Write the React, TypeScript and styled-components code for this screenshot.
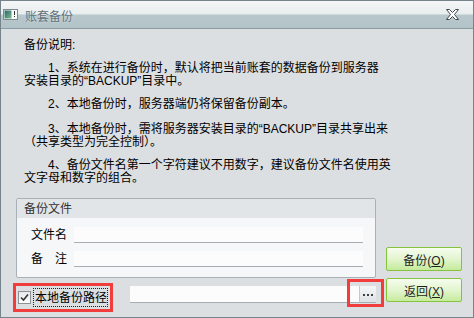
import React from 'react';
import styled, { createGlobalStyle } from 'styled-components';

const GlobalStyle = createGlobalStyle`
  html, body {
    margin: 0;
    padding: 0;
    background: #dcdfe2;
  }
  body {
    font-family: "Liberation Sans", "Noto Sans CJK SC", sans-serif;
    font-size: 12px;
    color: #000;
  }
`;

const Window = styled.div`
  width: 474px;
  height: 318px;
  box-sizing: border-box;
  border: 1px solid #74848a;
  background: #dcdfe2;
  display: flex;
  flex-direction: column;
`;

const TitleBar = styled.div`
  height: 27px;
  flex: none;
  display: flex;
  align-items: center;
  padding: 0 14px 0 2px;
  border-bottom: 1px solid #8b9ca2;
  background: linear-gradient(
    to bottom,
    #f4f6f7 0px,
    #e8edee 13px,
    #b7c7cc 14px,
    #b3c4c9 100%
  );
`;

const Title = styled.span`
  margin-left: 7px;
  padding-top: 4px;
  font-size: 12px;
  line-height: 14px;
  color: #5f7078;
  text-shadow: 0 0 2px rgba(255, 255, 255, 0.7);
  flex: 1;
`;

const Body = styled.div`
  flex: 1;
  padding-top: 10px;
  display: flex;
  flex-direction: column;
`;

const Notes = styled.div`
  padding-left: 23px;
`;

const Para = styled.p<{ $top?: number; $indent?: boolean }>`
  margin: ${(p) => p.$top ?? 0}px 0 0 0;
  line-height: 13px;
  white-space: nowrap;
  text-indent: ${(p) => (p.$indent ? 24 : 0)}px;
`;

const FileRow = styled.div`
  margin-top: 13px;
  padding-left: 15px;
  display: flex;
  align-items: flex-end;
`;

const GroupBox = styled.div`
  width: 360px;
  height: 80px;
  box-sizing: border-box;
  border: 1px solid #a9b0b6;
  border-radius: 2px;
  background: #f6f7f8;
  display: flex;
  flex-direction: column;
`;

const GroupHeader = styled.div`
  height: 19px;
  line-height: 20px;
  padding-left: 7px;
  background: #e2e5e8;
  color: #333;
`;

const GroupBody = styled.div`
  padding: 9px 11px 0 14px;
  display: flex;
  flex-direction: column;
  gap: 8px;
`;

const Field = styled.div`
  display: flex;
  align-items: flex-end;
  height: 16px;
`;

const FieldLabel = styled.span`
  width: 43px;
  line-height: 13px;
  padding-bottom: 1px;
  flex: none;
`;

const TextInput = styled.input`
  box-sizing: border-box;
  height: ${(p) => p.height ?? 16}px;
  width: ${(p) => p.width}px;
  padding: 0 3px;
  margin: 0;
  border: none;
  border-bottom: 1px solid #a6adb3;
  background: #fcfcfc;
  outline: none;
  font: inherit;
`;

const ActionButton = styled.button<{ $bottom?: number }>`
  width: 76px;
  height: 24px;
  margin: 0 0 ${(p) => p.$bottom ?? 0}px 10px;
  padding: 0;
  box-sizing: border-box;
  border: 1px solid #86c43e;
  border-radius: 2px;
  background: linear-gradient(to bottom, #f6fcef 0%, #e3f5cf 50%, #c5eb9c 100%);
  font-family: inherit;
  font-size: 12px;
  color: #1e1e1e;
  flex: none;
  u {
    text-decoration: underline;
    text-underline-offset: 1px;
  }
`;

const PathRow = styled.div`
  padding-left: 12px;
  display: flex;
  align-items: flex-start;
`;

const Highlight = styled.div`
  margin-top: 5px;
  width: 100px;
  height: 29px;
  box-sizing: border-box;
  border: 3px solid #f23d3d;
  display: flex;
  align-items: center;
  padding-left: 2px;
`;

const CheckBox = styled.span`
  width: 13px;
  height: 13px;
  box-sizing: border-box;
  border: 1px solid #8d9195;
  background: linear-gradient(to bottom, #e6e8ea, #fdfdfd);
  display: flex;
  align-items: center;
  justify-content: center;
  flex: none;
`;

const CheckLabel = styled.span`
  margin-left: 2px;
  height: 19px;
  width: 75px;
  box-sizing: border-box;
  border: 1px dotted #222;
  line-height: 18px;
  padding-left: 1px;
  white-space: nowrap;
`;

const Browse = styled.div`
  position: relative;
  margin-top: 8px;
`;

const BrowseButton = styled.div`
  width: 17px;
  height: 17px;
  box-sizing: border-box;
  border-left: 1px solid #c3c8cc;
  border-bottom: 1px solid #a6adb3;
  background: linear-gradient(to bottom, #f5f6f7, #dfe2e5);
  display: flex;
  align-items: center;
  justify-content: center;
  gap: 2px;
  padding-top: 2px;
`;

const Dot = styled.span`
  width: 2px;
  height: 2px;
  background: #3a3f44;
`;

const RedFrame = styled.div`
  position: absolute;
  left: -12px;
  top: -7px;
  width: 37px;
  height: 28px;
  box-sizing: border-box;
  border: 3px solid #f23d3d;
  pointer-events: none;
`;

function AppIcon() {
  return (
    <svg width="15" height="11" viewBox="0 0 15 11">
      <defs>
        <linearGradient id="ig" x1="0" y1="0" x2="1" y2="1">
          <stop offset="0" stopColor="#2c6470" />
          <stop offset="1" stopColor="#7bbf8a" />
        </linearGradient>
      </defs>
      <rect x="0.5" y="0.5" width="14" height="10" fill="#f8f9f9" stroke="#7d8a90" />
      <rect x="1.5" y="1.5" width="7" height="8" fill="url(#ig)" />
      <rect x="11" y="2" width="1" height="4" fill="#333" />
      <rect x="11" y="7" width="1" height="1" fill="#333" />
    </svg>
  );
}

function CloseIcon() {
  return (
    <svg width="13" height="11" viewBox="0 0 13 11">
      <polygon
        points="0.5,0.5 3.5,0.5 6.5,3.5 9.5,0.5 12.5,0.5 8.5,5.5 12.5,10.5 9.5,10.5 6.5,7.5 3.5,10.5 0.5,10.5 4.5,5.5"
        fill="#fff"
        stroke="#3e484e"
        strokeWidth="1"
        strokeLinejoin="round"
      />
    </svg>
  );
}

function CheckMark() {
  return (
    <svg width="9" height="9" viewBox="0 0 9 9">
      <path d="M1 4.5 L3.5 7 L8 1.5" fill="none" stroke="#333" strokeWidth="1.6" />
    </svg>
  );
}

export default function App() {
  return (
    <>
      <GlobalStyle />
      <Window>
        <TitleBar>
          <AppIcon />
          <Title>账套备份</Title>
          <CloseIcon />
        </TitleBar>
        <Body>
          <Notes>
            <Para>备份说明:</Para>
            <Para $top={10} $indent>
              1、系统在进行备份时，默认将把当前账套的数据备份到服务器
              <br />
              安装目录的“BACKUP”目录中。
            </Para>
            <Para $top={10} $indent>
              2、本地备份时，服务器端仍将保留备份副本。
            </Para>
            <Para $top={12} $indent>
              3、本地备份时，需将服务器安装目录的“BACKUP”目录共享出来
              <br />
              （共享类型为完全控制）。
            </Para>
            <Para $top={10} $indent>
              4、备份文件名第一个字符建议不用数字，建议备份文件名使用英
              <br />
              文字母和数字的组合。
            </Para>
          </Notes>
          <FileRow>
            <GroupBox>
              <GroupHeader>备份文件</GroupHeader>
              <GroupBody>
                <Field>
                  <FieldLabel>文件名</FieldLabel>
                  <TextInput width={289} readOnly />
                </Field>
                <Field>
                  <FieldLabel>备　注</FieldLabel>
                  <TextInput width={289} readOnly />
                </Field>
              </GroupBody>
            </GroupBox>
            <ActionButton $bottom={7}>
              备份(<u>O</u>)
            </ActionButton>
          </FileRow>
          <PathRow>
            <Highlight>
              <CheckBox>
                <CheckMark />
              </CheckBox>
              <CheckLabel>本地备份路径</CheckLabel>
            </Highlight>
            <TextInput
              width={229}
              height={17}
              readOnly
              style={{ marginTop: 8, marginLeft: 17 }}
            />
            <Browse>
              <BrowseButton>
                <Dot />
                <Dot />
                <Dot />
              </BrowseButton>
              <RedFrame />
            </Browse>
            <ActionButton>
              返回(<u>X</u>)
            </ActionButton>
          </PathRow>
        </Body>
      </Window>
    </>
  );
}
